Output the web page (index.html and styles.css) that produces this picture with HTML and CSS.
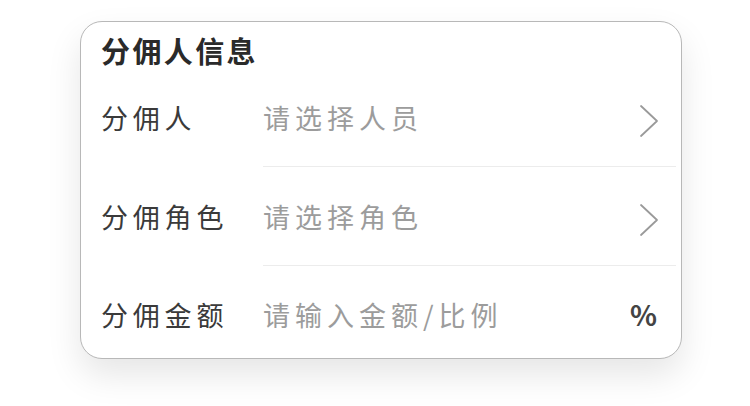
FILE: index.html
```html
<!DOCTYPE html>
<html>
<head>
    <title>分佣人信息</title>
    <link rel="stylesheet" href="styles.css">
</head>
<body>
    <div class="card">
        <div class="card-title">分佣人信息</div>

        <div class="row">
            <div class="row-label">分佣人</div>
            <div class="row-field">
                <span class="placeholder">请选择人员</span>
                <svg class="chevron" width="20" height="34" viewBox="0 0 20 34">
                    <polyline points="2,2 18,17 2,32" fill="none" stroke="#9a9a9a" stroke-width="1.8" stroke-linecap="round" stroke-linejoin="round"/>
                </svg>
            </div>
        </div>

        <div class="row">
            <div class="row-label">分佣角色</div>
            <div class="row-field">
                <span class="placeholder">请选择角色</span>
                <svg class="chevron" width="20" height="34" viewBox="0 0 20 34">
                    <polyline points="2,2 18,17 2,32" fill="none" stroke="#9a9a9a" stroke-width="1.8" stroke-linecap="round" stroke-linejoin="round"/>
                </svg>
            </div>
        </div>

        <div class="row row-last">
            <div class="row-label">分佣金额</div>
            <div class="row-field">
                <span class="placeholder">请输入金额/比例</span>
                <span class="unit">%</span>
            </div>
        </div>
    </div>
</body>
</html>
```

FILE: styles.css
```css
html, body { height: 100%; }
body { margin: 0; background: #fff; font-family: "Noto Sans CJK SC", "Noto Sans", sans-serif; }

.card {
    box-sizing: border-box;
    width: 602px;
    height: 338px;
    margin: 21px 0 0 80px;
    border: 1px solid #b8b8b8;
    border-radius: 22px;
    background: #fff;
    box-shadow: 0 16px 34px rgba(0, 0, 0, 0.1);
    display: flex;
    flex-direction: column;
    overflow: hidden;
}

.card-title {
    box-sizing: border-box;
    height: 46px;
    padding: 12px 20px 0;
    font-size: 29px;
    line-height: 33px;
    font-weight: bold;
    letter-spacing: 2.4px;
    color: #2a2a2a;
}

.row { display: flex; height: 99px; padding-left: 20px; }
.row-last { flex: 1; height: auto; padding-top: 4px; }

.row-label {
    width: 162px;
    flex-shrink: 0;
    display: flex;
    align-items: center;
    font-size: 27px;
    letter-spacing: 4.8px;
    color: #3a3a3a;
}

.row-field {
    flex: 1;
    display: flex;
    align-items: center;
    justify-content: space-between;
    margin-right: 5px;
    padding-right: 17px;
    border-bottom: 1px solid #ececec;
}
.row-last .row-field { border-bottom: none; padding-right: 19px; }

.placeholder { font-size: 27px; letter-spacing: 5px; color: #9c9c9c; }
.chevron { display: block; margin-top: 7px; }
.unit { font-size: 28px; font-weight: bold; color: #444; }
```
